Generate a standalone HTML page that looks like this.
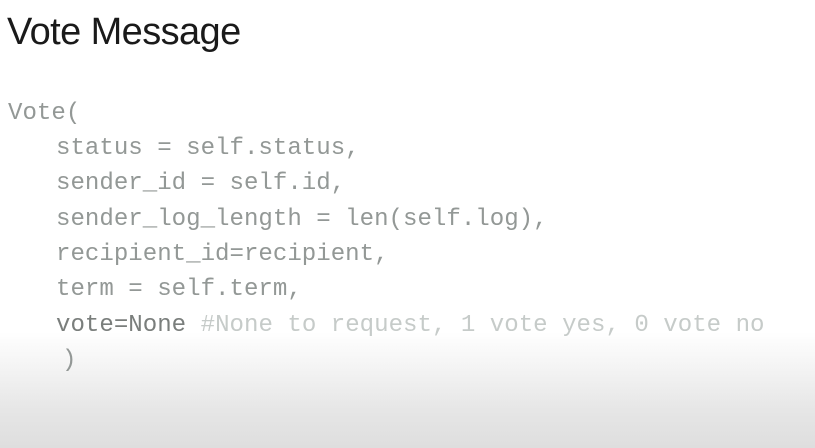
<!DOCTYPE html>
<html><head><style>
html,body{margin:0;padding:0}
body{width:815px;height:448px;overflow:hidden;position:relative;background:linear-gradient(to bottom,#fff 0,#fff 332px,#f3f3f3 370px,#e6e6e6 410px,#dedede 448px);font-family:"Liberation Sans",sans-serif}
h1{position:absolute;left:7px;top:11px;margin:0;font-weight:normal;font-size:38px;color:#1a1a1a;letter-spacing:-0.6px}
.c{position:absolute;left:8px;font-family:"Liberation Mono",monospace;font-size:24.1px;color:#939896;white-space:pre;line-height:35.3px}
.i{left:56px}
.d{color:#7a7e7c}
.cm{color:#c6cbc9}
</style></head><body>
<h1>Vote Message</h1>
<div class="c" style="top:96px">Vote(</div>
<div class="c i" style="top:131px">status = self.status,</div>
<div class="c i" style="top:166px">sender_id = self.id,</div>
<div class="c i" style="top:202px">sender_log_length = len(self.log),</div>
<div class="c i" style="top:237px">recipient_id=recipient,</div>
<div class="c i" style="top:272px">term = self.term,</div>
<div class="c i" style="top:308px"><span class="d">vote=None</span> <span class="cm">#None to request, 1 vote yes, 0 vote no</span></div>
<div class="c" style="top:343px;left:62px">)</div>
</body></html>
